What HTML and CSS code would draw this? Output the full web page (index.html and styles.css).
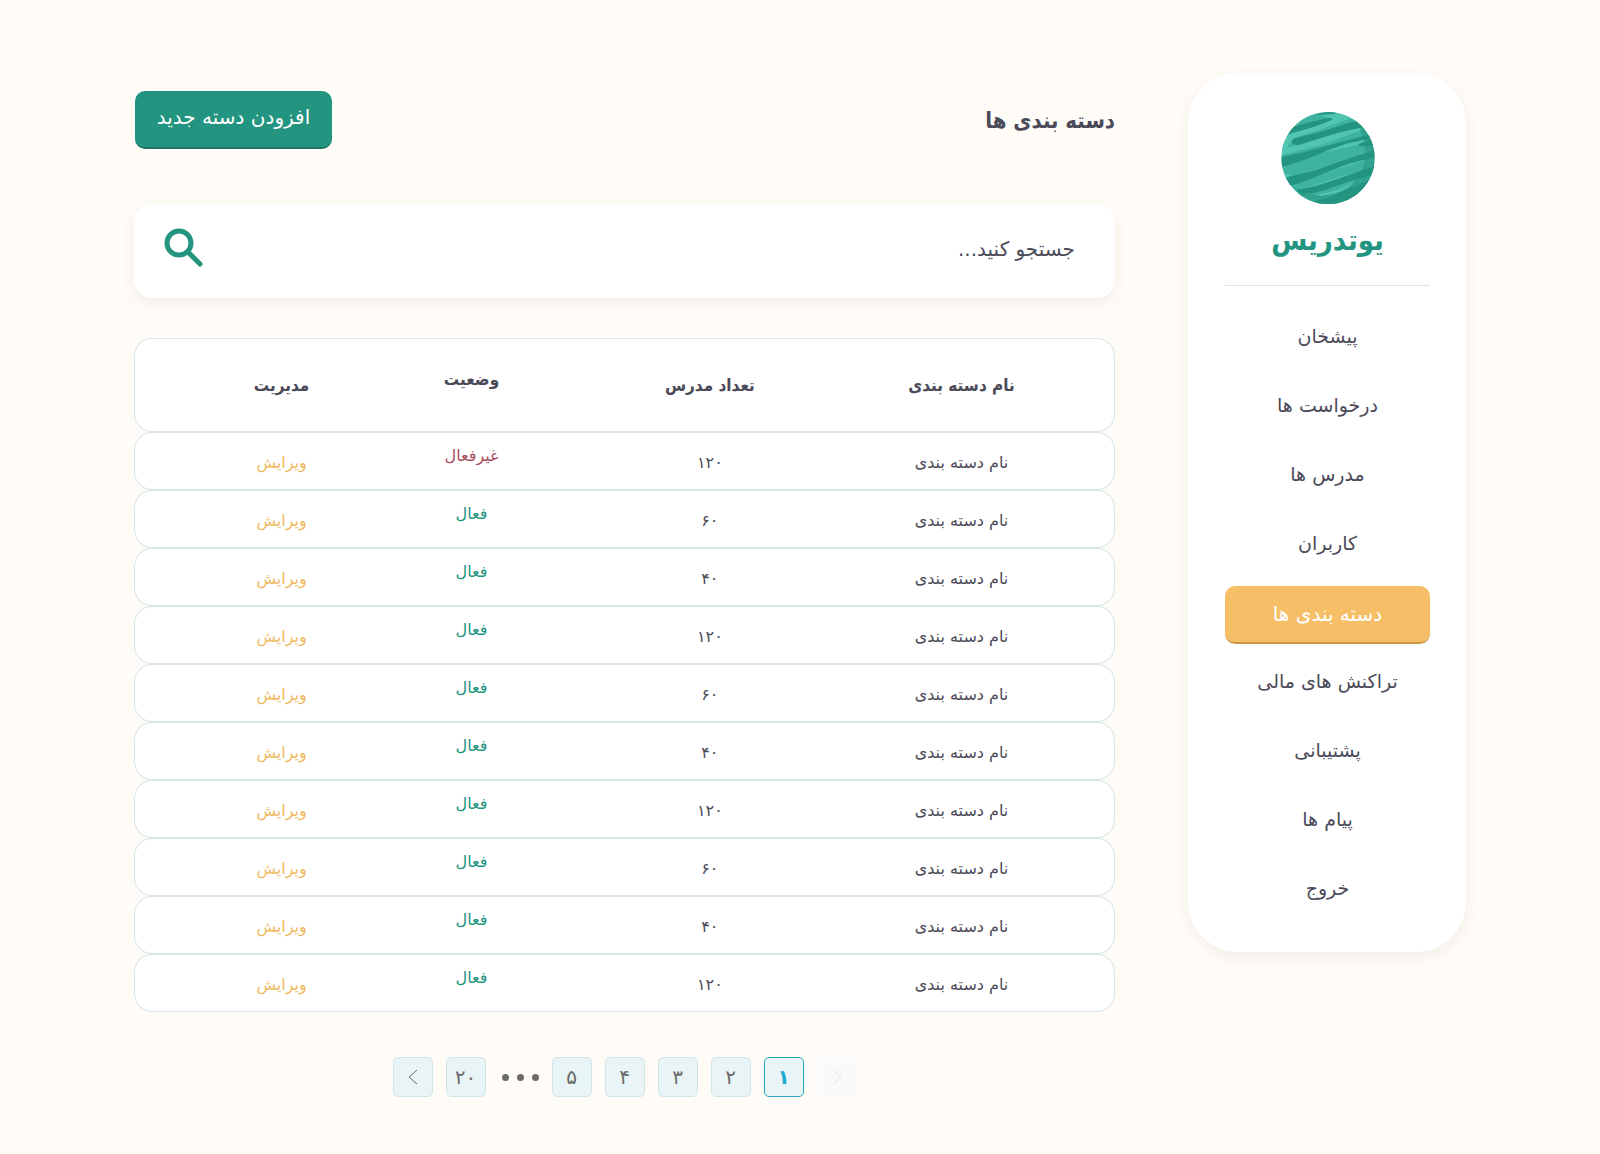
FILE: index.html
```html
<!DOCTYPE html>
<html lang="fa" dir="rtl">
<head>
<meta charset="utf-8">
<meta name="viewport" content="width=device-width, initial-scale=1">
<title>دسته بندی ها</title>
<link rel="stylesheet" href="styles.css">
</head>
<body>
<div class="page">
  <aside class="sidebar">
    <a class="brand" href="#">
      <svg class="brand-mark" viewBox="301 156 280 276" aria-hidden="true">
        <defs><clipPath id="disc"><ellipse cx="441" cy="294" rx="140" ry="138"/></clipPath></defs>
        <g clip-path="url(#disc)">
          <path fill="#3eb4a0" d="M301 156h280v276H301z"/>
          <path fill="#31a28d" d="M505 156Q552 220 552 280Q550 345 505 380Q460 405 350 402L370 432H581V156z"/>
          <path fill="#52c5b1" d="M318 224L455 178L420 166L470 160L512 174L440 200L335 236L320 262L303 284V262z"/>
          <path fill="#52c5b1" d="M303 286V268L440 228L536 203L540 210L430 252zM430 276L500 250L548 238L550 248L490 264zM303 350L318 341L332 344L316 354zM430 342L500 312L550 293L549 302L490 320zM352 388L400 376L470 352L545 333L540 342L460 368L400 386zM400 404Q470 398 518 366L498 384Q470 402 420 408z"/>
          <g fill="#22947f">
            <path d="M405 166Q425 154 470 156L460 162Q430 162 405 166z"/>
            <path d="M316 224L338 200L400 183L445 173Q458 174 450 181Q420 195 380 206z"/>
            <path d="M343 234L420 215L500 190Q518 184 535 182L550 201L480 215L410 237L354 255Q340 257 334 249Q330 239 343 234z"/>
            <path d="M301 291L370 276L460 251L568 223L574 235L500 250L440 270Q380 298 340 310L301 321z"/>
            <path d="M533 252L574 236L580 255Q555 262 533 257z"/>
            <path d="M312 353L400 332L490 300L581 271V292L500 312L430 340Q370 366 326 378z"/>
            <path d="M345 389Q400 382 460 360L581 318V343L500 366L440 388Q400 402 360 402z"/>
            <path d="M385 428L440 414L500 388L581 354V432H390z"/>
          </g>
        </g>
      </svg>
      <span class="brand-name">یوتدریس</span>
    </a>
    <nav class="menu">
      <a class="menu-link" href="#">پیشخان</a>
      <a class="menu-link" href="#">درخواست ها</a>
      <a class="menu-link" href="#">مدرس ها</a>
      <a class="menu-link" href="#">کاربران</a>
      <a class="menu-link active" href="#" aria-current="page">دسته بندی ها</a>
      <a class="menu-link" href="#">تراکنش های مالی</a>
      <a class="menu-link" href="#">پشتیبانی</a>
      <a class="menu-link" href="#">پیام ها</a>
      <a class="menu-link" href="#">خروج</a>
    </nav>
  </aside>

  <main class="content">
    <header class="heading">
      <h1>دسته بندی ها</h1>
      <button class="add-button" type="button">افزودن دسته جدید</button>
    </header>

    <form class="search">
      <input class="search-input" type="text" placeholder="جستجو کنید..." aria-label="جستجو">
      <button class="search-button" type="button" aria-label="جستجو">
        <svg viewBox="0 0 40 40" width="40" height="40" fill="none" stroke="#22947f" stroke-width="5" stroke-linecap="round" aria-hidden="true"><circle cx="15" cy="15" r="12"/><path d="M24 24L36 36"/></svg>
      </button>
    </form>

    <table class="categories">
      <thead>
        <tr><th class="name">نام دسته بندی</th><th class="count">تعداد مدرس</th><th class="status">وضعیت</th><th class="manage">مدیریت</th></tr>
      </thead>
      <tbody>
        <tr><td>نام دسته بندی</td><td>۱۲۰</td><td class="status off">غیرفعال</td><td class="manage"><a href="#">ویرایش</a></td></tr>
        <tr><td>نام دسته بندی</td><td>۶۰</td><td class="status">فعال</td><td class="manage"><a href="#">ویرایش</a></td></tr>
        <tr><td>نام دسته بندی</td><td>۴۰</td><td class="status">فعال</td><td class="manage"><a href="#">ویرایش</a></td></tr>
        <tr><td>نام دسته بندی</td><td>۱۲۰</td><td class="status">فعال</td><td class="manage"><a href="#">ویرایش</a></td></tr>
        <tr><td>نام دسته بندی</td><td>۶۰</td><td class="status">فعال</td><td class="manage"><a href="#">ویرایش</a></td></tr>
        <tr><td>نام دسته بندی</td><td>۴۰</td><td class="status">فعال</td><td class="manage"><a href="#">ویرایش</a></td></tr>
        <tr><td>نام دسته بندی</td><td>۱۲۰</td><td class="status">فعال</td><td class="manage"><a href="#">ویرایش</a></td></tr>
        <tr><td>نام دسته بندی</td><td>۶۰</td><td class="status">فعال</td><td class="manage"><a href="#">ویرایش</a></td></tr>
        <tr><td>نام دسته بندی</td><td>۴۰</td><td class="status">فعال</td><td class="manage"><a href="#">ویرایش</a></td></tr>
        <tr><td>نام دسته بندی</td><td>۱۲۰</td><td class="status">فعال</td><td class="manage"><a href="#">ویرایش</a></td></tr>
      </tbody>
    </table>

    <nav class="pagination" aria-label="صفحه ها">
      <button class="page-button" type="button" disabled aria-label="قبلی"><svg viewBox="0 0 10 16" width="10" height="16" fill="none" stroke="currentColor" aria-hidden="true"><path d="M1 1l8 7l-8 7"/></svg></button>
      <button class="page-button current" type="button" aria-current="page">۱</button>
      <button class="page-button" type="button">۲</button>
      <button class="page-button" type="button">۳</button>
      <button class="page-button" type="button">۴</button>
      <button class="page-button" type="button">۵</button>
      <span class="dots"><i></i><i></i><i></i></span>
      <button class="page-button" type="button">۲۰</button>
      <button class="page-button" type="button" aria-label="بعدی"><svg viewBox="0 0 10 16" width="10" height="16" fill="none" stroke="currentColor" aria-hidden="true"><path d="M9 1L1 8l8 7"/></svg></button>
    </nav>
  </main>
</div>
</body>
</html>
```
FILE: styles.css
```css
:root {
  --teal: #22947f;
  --ink: #4b4a58;
  --line: #d8e6ea;
  --shadow: 0 5px 15px rgba(80, 80, 60, 0.08);
  --condensed: "DejaVu Sans Condensed", "DejaVu Sans", sans-serif;
}

* {
  box-sizing: border-box;
}

body {
  margin: 0;
  background: #fffcf7;
  color: var(--ink);
  font-family: "DejaVu Sans", sans-serif;
  font-size: 20px;
}

a {
  color: inherit;
  text-decoration: none;
}

button,
input {
  font: inherit;
  color: inherit;
}

.page {
  display: flex;
  align-items: flex-start;
  gap: 73px;
  padding: 73px 134px 56px;
}

.sidebar {
  flex: none;
  width: 278px;
  padding: 39px 36px 32px 37px;
  border-radius: 50px;
  background: #fff;
  box-shadow: var(--shadow);
}

.brand {
  display: flex;
  flex-direction: column;
  align-items: center;
  padding-bottom: 25px;
  border-bottom: 1px solid var(--line);
}

.brand-mark {
  width: 94px;
  height: 92px;
}

.brand-name {
  margin-top: 16px;
  color: var(--teal);
  font-family: var(--condensed);
  font-size: 29px;
  font-weight: 700;
  line-height: 40px;
}

.menu {
  display: flex;
  flex-direction: column;
  gap: 11px;
  padding-top: 24px;
}

.menu-link {
  height: 58px;
  font-size: 19px;
  line-height: 52px;
  text-align: center;
}

.menu-link.active {
  border-bottom: 2px solid #cb984a;
  border-radius: 10px;
  background: #f6be67;
  color: #fff;
  font-size: 20px;
  line-height: 56px;
}

.content {
  flex: 1;
  min-width: 0;
}

.heading {
  display: flex;
  align-items: center;
  justify-content: space-between;
  padding-top: 18px;
}

h1 {
  margin: 0;
  font-family: var(--condensed);
  font-size: 22px;
  font-weight: 700;
}

.add-button {
  width: 197px;
  height: 58px;
  margin-left: 1px;
  padding: 0 0 4px;
  border: 0;
  border-bottom: 2px solid #1c7565;
  border-radius: 10px;
  background: var(--teal);
  color: #fff;
}

.search {
  display: flex;
  align-items: center;
  height: 94px;
  margin-top: 55px;
  padding: 0 40px 0 28px;
  border-radius: 18px;
  background: #fff;
  box-shadow: var(--shadow);
}

.search-input {
  flex: 1;
  min-width: 0;
  padding: 0 0 4px;
  border: 0;
  outline: 0;
  background: none;
}

.search-input::placeholder {
  color: var(--ink);
  opacity: 1;
}

.search-button {
  padding: 0 2px 6px;
  border: 0;
  background: none;
}

.search-button svg {
  display: block;
}

.categories {
  width: 100%;
  margin-top: 40px;
  table-layout: fixed;
  border-collapse: separate;
  border-spacing: 0;
  font-size: 16px;
}

th,
td {
  height: 58px;
  padding: 2px 0 0;
  border: 0 solid var(--line);
  border-width: 1px 0;
  background: #fff;
  text-align: center;
}

th {
  height: 94px;
  padding-top: 0;
  font-family: var(--condensed);
  font-size: 17px;
}

tr > :first-child {
  border-right-width: 1px;
  border-radius: 0 18px 18px 0;
}

tr > :last-child {
  border-left-width: 1px;
  border-radius: 18px 0 0 18px;
}

th.name {
  width: 31.2%;
}

th.count {
  width: 20.2%;
}

th.status {
  width: 28.4%;
}

.status {
  padding-bottom: 13px;
}

td.status {
  color: var(--teal);
}

td.status.off {
  color: #a5505e;
}

.manage {
  padding-left: 96px;
}

td.manage {
  color: #efb95f;
}

.pagination {
  display: flex;
  justify-content: center;
  gap: 13px;
  margin-top: 45px;
}

.page-button {
  display: flex;
  align-items: center;
  justify-content: center;
  width: 40px;
  height: 40px;
  padding: 0;
  border: 1px solid #d1e5e9;
  border-radius: 5px;
  background: #e8f4f6;
  color: #6b6b6b;
}

.page-button.current {
  border-color: #2ba3bd;
  color: #1fa9cf;
  font-weight: 700;
}

.page-button:disabled {
  border-color: #fafafa;
  background: #fafafa;
  color: #e6e6e6;
}

.dots {
  display: flex;
  align-items: center;
  justify-content: center;
  gap: 8px;
  width: 40px;
  padding-left: 4px;
}

.dots i {
  flex: none;
  width: 7px;
  height: 7px;
  border-radius: 50%;
  background: #6b6b6b;
}
```
